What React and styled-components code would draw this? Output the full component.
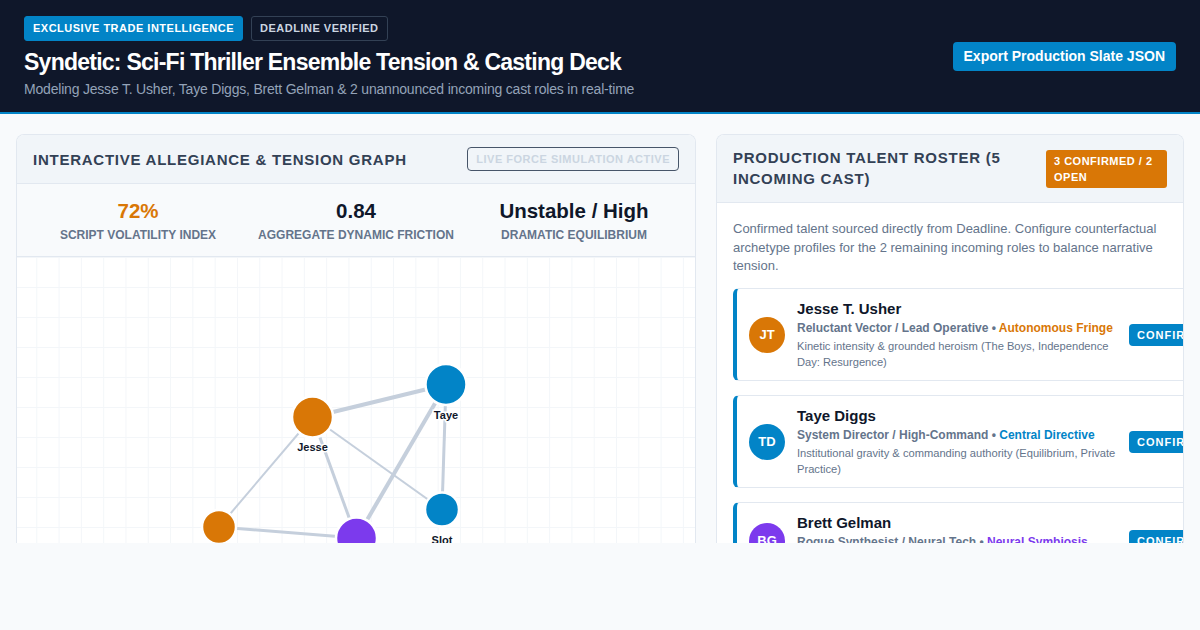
import React from "react";
import styled, { createGlobalStyle } from "styled-components";

const Global = createGlobalStyle`
  html, body { margin: 0; padding: 0; background: #f8fafc; }
  body { font-family: "Liberation Sans", Arial, sans-serif; color: #0f172a; }
  * { box-sizing: border-box; }
`;

const Header = styled.header`
  background: #0f172a;
  border-bottom: 2px solid #0284c7;
  height: 114px;
  padding: 16px 24px 0;
  display: flex;
  align-items: center;
  justify-content: space-between;
`;

const HeadLeft = styled.div`
  display: flex;
  flex-direction: column;
  align-self: flex-start;
`;

const BadgeRow = styled.div`
  display: flex;
  gap: 8px;
`;

const Tag = styled.span`
  font-size: 11px;
  font-weight: 700;
  letter-spacing: 0.5px;
  text-transform: uppercase;
  line-height: 15px;
  padding: 4px 8px;
  border-radius: 3px;
  color: ${(p) => (p.$outline ? "#cbd5e1" : "#ffffff")};
  background: ${(p) => (p.$outline ? "transparent" : "#0284c7")};
  border: 1px solid ${(p) => (p.$outline ? "#334155" : "#0284c7")};
`;

const Title = styled.h1`
  margin: 7px 0 0;
  font-size: 23px;
  font-weight: 700;
  letter-spacing: -0.75px;
  color: #ffffff;
  line-height: 28px;
`;

const Subtitle = styled.p`
  margin: 4px 0 0;
  font-size: 14px;
  letter-spacing: -0.2px;
  color: #94a3b8;
  line-height: 18px;
`;

const ExportButton = styled.button`
  font-family: inherit;
  font-size: 14px;
  font-weight: 700;
  color: #ffffff;
  background: #0284c7;
  border: none;
  border-radius: 4px;
  padding: 0 11px;
  height: 29px;
  margin-top: -16px;
`;

const Main = styled.main`
  height: 429px;
  overflow: hidden;
  padding: 20px 16px 0;
  display: grid;
  grid-template-columns: 680px 1fr;
  gap: 20px;
`;

const Panel = styled.section`
  background: #ffffff;
  border: 1px solid #e2e8f0;
  border-bottom: none;
  border-radius: 8px 8px 0 0;
  overflow: hidden;
  display: flex;
  flex-direction: column;
  min-width: 0;
`;

const PanelHead = styled.div`
  background: #f1f5f9;
  border-bottom: 1px solid #e2e8f0;
  display: flex;
  align-items: ${(p) => p.$align || "center"};
  justify-content: space-between;
  gap: 16px;
  padding: ${(p) => p.$pad || "12px 16px"};
`;

const PanelTitle = styled.h2`
  margin: 0;
  font-size: 15px;
  font-weight: 700;
  letter-spacing: 0.75px;
  text-transform: uppercase;
  color: #334155;
  line-height: 21px;
`;

const LiveBadge = styled.span`
  font-size: 11px;
  font-weight: 700;
  letter-spacing: 0.5px;
  color: #cbd5e1;
  border: 1px solid #475569;
  border-radius: 4px;
  padding: 4px 8px;
  line-height: 14px;
  white-space: nowrap;
`;

const CountBadge = styled.span`
  flex: 0 0 auto;
  width: 121px;
  font-size: 11px;
  font-weight: 700;
  letter-spacing: 0.5px;
  color: #ffffff;
  background: #d97706;
  border-radius: 3px;
  padding: 3px 8px;
  line-height: 16px;
  margin-top: 3px;
`;

const Stats = styled.div`
  display: grid;
  grid-template-columns: repeat(3, 1fr);
  padding: 15px 12px 14px;
  background: #f8fafc;
  border-bottom: 1px solid #e2e8f0;
`;

const Stat = styled.div`
  display: flex;
  flex-direction: column;
  align-items: center;
  gap: 5px;
`;

const StatValue = styled.div`
  font-size: 20.5px;
  font-weight: 700;
  line-height: 24px;
  color: ${(p) => p.$color || "#0f172a"};
`;

const StatLabel = styled.div`
  font-size: 12px;
  font-weight: 700;
  text-transform: uppercase;
  color: #64748b;
  line-height: 14px;
`;

const GraphArea = styled.div`
  flex: 1;
  position: relative;
  background-color: #ffffff;
  background-image:
    linear-gradient(to right, #f3f6f9 1px, transparent 1px),
    linear-gradient(to bottom, #f3f6f9 1px, transparent 1px);
  background-size: 22.3px 30px;
  background-position: -3px 0;
`;

const GraphSvg = styled.svg`
  display: block;
  width: 100%;
  height: 400px;
`;

const Body = styled.div`
  padding: 17px 16px 0;
  display: flex;
  flex-direction: column;
  gap: 12px;
`;

const Description = styled.p`
  margin: 0;
  font-size: 13px;
  line-height: 18.5px;
  color: #64748b;
`;

const CardList = styled.div`
  display: flex;
  flex-direction: column;
  gap: 14px;
`;

const Card = styled.div`
  width: max-content;
  display: flex;
  align-items: center;
  gap: 12px;
  padding: 11px 12px 10px 12px;
  border: 1px solid #e2e8f0;
  border-left: 4px solid #0284c7;
  border-radius: 6px;
  background: #ffffff;
`;

const Avatar = styled.div`
  flex: 0 0 36px;
  width: 36px;
  height: 36px;
  border-radius: 50%;
  background: ${(p) => p.$color};
  color: #ffffff;
  font-size: 13px;
  font-weight: 700;
  display: flex;
  align-items: center;
  justify-content: center;
`;

const Info = styled.div`
  width: 322px;
  flex: 0 0 322px;
  display: flex;
  flex-direction: column;
`;

const Name = styled.div`
  font-size: 15px;
  font-weight: 700;
  color: #0f172a;
  line-height: 18px;
`;

const Role = styled.div`
  margin-top: 2px;
  font-size: 12px;
  font-weight: 700;
  color: #64748b;
  line-height: 16px;
`;

const Faction = styled.span`
  color: ${(p) => p.$color};
`;

const Blurb = styled.div`
  margin-top: 2px;
  font-size: 11.15px;
  color: #64748b;
  line-height: 16px;
`;

const ConfirmButton = styled.button`
  flex: 0 0 auto;
  font-family: inherit;
  font-size: 11px;
  font-weight: 700;
  letter-spacing: 1px;
  color: #ffffff;
  background: #0284c7;
  border: none;
  border-radius: 4px;
  height: 22px;
  padding: 0 8px;
  margin-left: -2px;
`;

const nodes = {
  taye: { x: 429, y: 127.5, r: 20.5, color: "#0284c7", label: "Taye" },
  jesse: { x: 295.5, y: 160, r: 20.5, color: "#d97706", label: "Jesse" },
  slot: { x: 425, y: 252.5, r: 17, color: "#0284c7", label: "Slot" },
  left: { x: 202, y: 270, r: 17, color: "#d97706", label: "Slot B" },
  brett: { x: 339.5, y: 281, r: 20.5, color: "#7c3aed", label: "Brett" },
};

const edges = [
  ["jesse", "taye", 4],
  ["taye", "brett", 4],
  ["taye", "slot", 3],
  ["jesse", "slot", 2],
  ["jesse", "brett", 3],
  ["jesse", "left", 2],
  ["left", "brett", 3],
];

const cast = [
  {
    initials: "JT",
    color: "#d97706",
    name: "Jesse T. Usher",
    role: "Reluctant Vector / Lead Operative",
    faction: "Autonomous Fringe",
    factionColor: "#d97706",
    blurb: "Kinetic intensity & grounded heroism (The Boys, Independence Day: Resurgence)",
  },
  {
    initials: "TD",
    color: "#0284c7",
    name: "Taye Diggs",
    role: "System Director / High-Command",
    faction: "Central Directive",
    factionColor: "#0284c7",
    blurb: "Institutional gravity & commanding authority (Equilibrium, Private Practice)",
  },
  {
    initials: "BG",
    color: "#7c3aed",
    name: "Brett Gelman",
    role: "Rogue Synthesist / Neural Tech",
    faction: "Neural Symbiosis",
    factionColor: "#7c3aed",
    blurb: "Unsettling eccentricity & volatile wit (Stranger Things, Fleabag)",
  },
];

function Graph() {
  return (
    <GraphSvg viewBox="0 0 678 400" preserveAspectRatio="xMinYMin meet">
      {edges.map(([a, b, w]) => (
        <line
          key={a + b}
          x1={nodes[a].x}
          y1={nodes[a].y}
          x2={nodes[b].x}
          y2={nodes[b].y}
          stroke="#c5cfdc"
          strokeWidth={w}
        />
      ))}
      {Object.entries(nodes).map(([k, n]) => (
        <g key={k}>
          <circle cx={n.x} cy={n.y} r={n.r} fill={n.color} stroke="#ffffff" strokeWidth="2.5" />
          <text
            x={n.x}
            y={n.y + 34}
            textAnchor="middle"
            fontFamily='"Liberation Sans", Arial, sans-serif'
            fontSize="11"
            fontWeight="700"
            fill="#0f172a"
            stroke="#ffffff"
            strokeWidth="3"
            paintOrder="stroke"
          >
            {n.label}
          </text>
        </g>
      ))}
    </GraphSvg>
  );
}

export default function App() {
  return (
    <>
      <Global />
      <Header>
        <HeadLeft>
          <BadgeRow>
            <Tag>Exclusive Trade Intelligence</Tag>
            <Tag $outline>Deadline Verified</Tag>
          </BadgeRow>
          <Title>Syndetic: Sci-Fi Thriller Ensemble Tension &amp; Casting Deck</Title>
          <Subtitle>
            Modeling Jesse T. Usher, Taye Diggs, Brett Gelman &amp; 2 unannounced incoming cast roles in real-time
          </Subtitle>
        </HeadLeft>
        <ExportButton>Export Production Slate JSON</ExportButton>
      </Header>
      <Main>
        <Panel>
          <PanelHead>
            <PanelTitle>Interactive Allegiance &amp; Tension Graph</PanelTitle>
            <LiveBadge>LIVE FORCE SIMULATION ACTIVE</LiveBadge>
          </PanelHead>
          <Stats>
            <Stat>
              <StatValue $color="#d97706">72%</StatValue>
              <StatLabel>Script Volatility Index</StatLabel>
            </Stat>
            <Stat>
              <StatValue>0.84</StatValue>
              <StatLabel>Aggregate Dynamic Friction</StatLabel>
            </Stat>
            <Stat>
              <StatValue>Unstable / High</StatValue>
              <StatLabel>Dramatic Equilibrium</StatLabel>
            </Stat>
          </Stats>
          <GraphArea>
            <Graph />
          </GraphArea>
        </Panel>
        <Panel>
          <PanelHead $align="flex-start" $pad="12px 16px 13px">
            <PanelTitle>Production Talent Roster (5 Incoming Cast)</PanelTitle>
            <CountBadge>3 CONFIRMED / 2 OPEN</CountBadge>
          </PanelHead>
          <Body>
            <Description>
              Confirmed talent sourced directly from Deadline. Configure counterfactual archetype profiles for the 2
              remaining incoming roles to balance narrative tension.
            </Description>
            <CardList>
              {cast.map((c) => (
                <Card key={c.initials}>
                  <Avatar $color={c.color}>{c.initials}</Avatar>
                  <Info>
                    <Name>{c.name}</Name>
                    <Role>
                      {c.role} • <Faction $color={c.factionColor}>{c.faction}</Faction>
                    </Role>
                    <Blurb>{c.blurb}</Blurb>
                  </Info>
                  <ConfirmButton>CONFIRMED</ConfirmButton>
                </Card>
              ))}
            </CardList>
          </Body>
        </Panel>
      </Main>
    </>
  );
}
